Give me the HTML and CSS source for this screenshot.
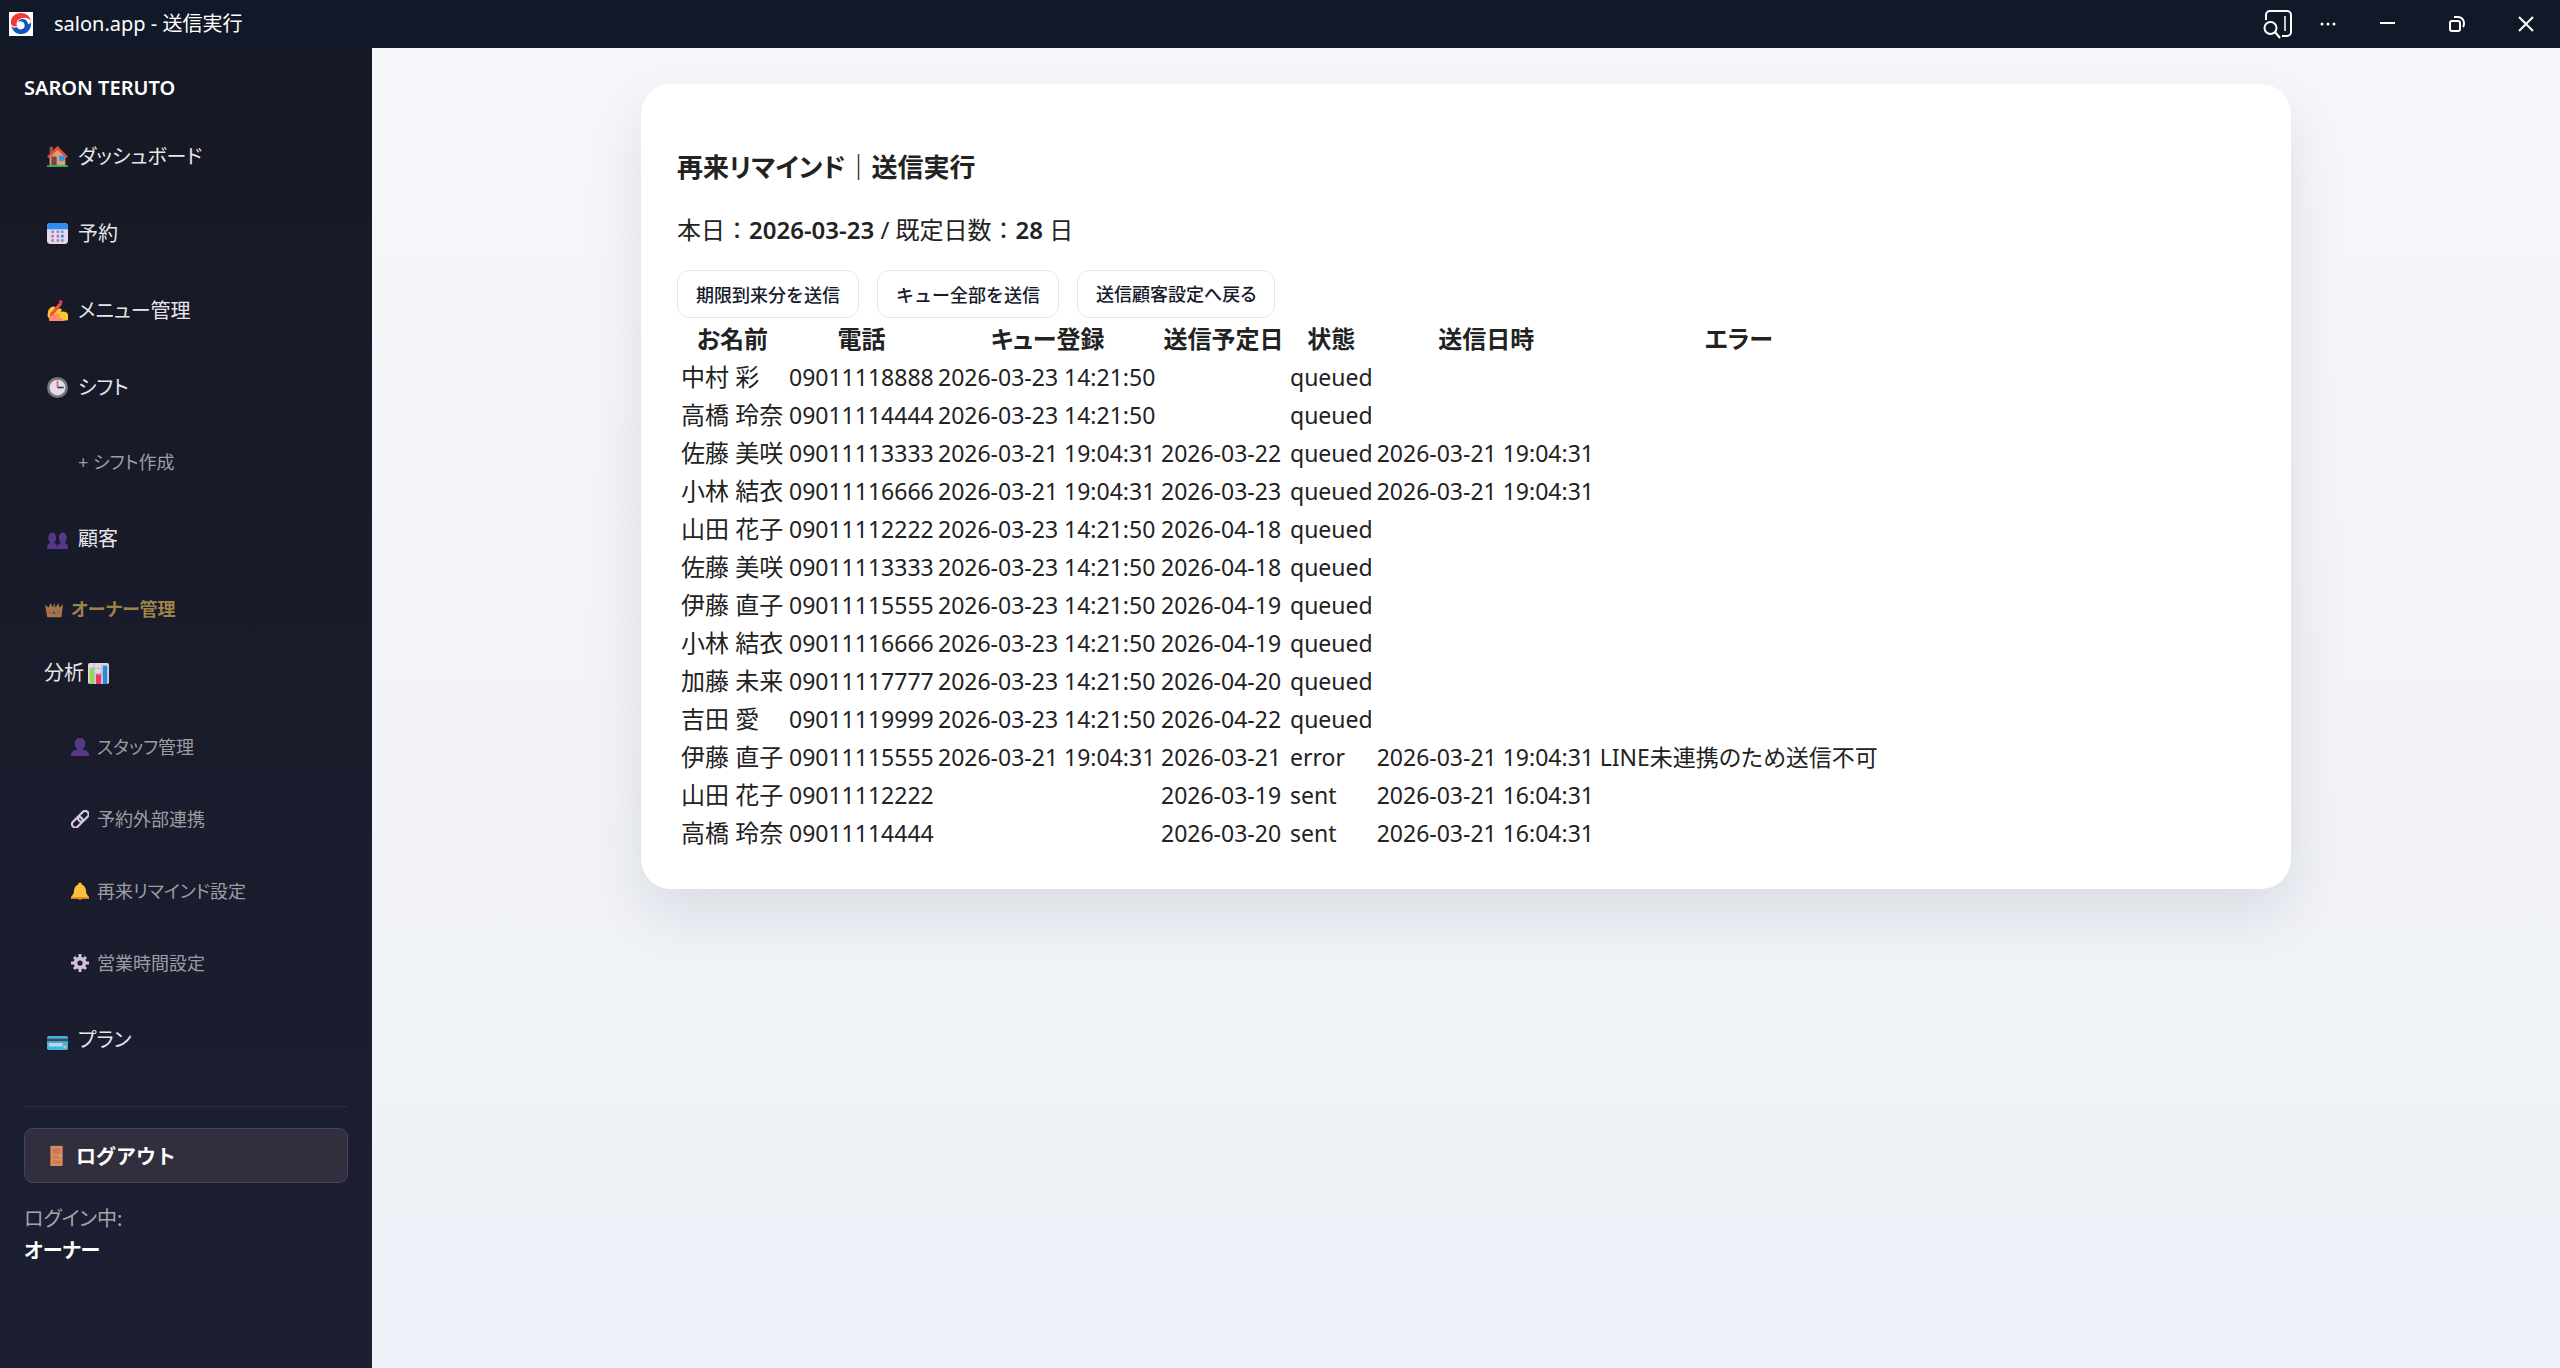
FILE: index.html
```
<!DOCTYPE html>
<html lang="ja">
<head>
  <meta charset="UTF-8" />
  <meta name="viewport" content="width=device-width, initial-scale=1.0"/>
  <title>salon.app - 送信実行</title>
  <link rel="stylesheet" href="styles.css">
</head>
<body>
  <header class="titlebar">
    <svg class="app-icon" viewBox="0 0 24 24" aria-hidden="true">
      <rect width="24" height="24" fill="#fff"/>
      <path d="M2 12C1 5 6 1 12 1c5 0 9 3 10 8-3-4-8-4-11-2-3 1-4 4-3 7-3 1-5 0-6-2z" fill="#ee3b33"/>
      <path d="M22 9c1 8-4 14-11 13-4 0-7-3-9-8 2 2 4 2 6 1 1 3 5 3 7 1 1-2 1-4-1-6-2-1-3-1-5 0 1-3 5-4 8-2 1 1 2 3 2 4 2 0 3-1 3-3z" fill="#1554b8"/>
    </svg>
    <span class="app-title">salon.app - 送信実行</span>
    <button class="tool-button" aria-label="検索">
      <svg width="30" height="30" viewBox="0 0 30 30" fill="none" stroke="#fff" stroke-width="2">
        <path d="M3 11V6a4 4 0 0 1 4-4h17a4 4 0 0 1 4 4v17a4 4 0 0 1-4 4h-5"/>
        <path d="M22 7v15" stroke-width="2" stroke="#c5c8ce"/>
        <circle cx="7.500" cy="19" r="6"/>
        <path d="M12 23l5 6"/>
      </svg>
    </button>
    <button class="tool-button" aria-label="その他">
      <svg width="16" height="4" viewBox="0 0 16 4" fill="#fff"><circle cx="2" cy="2" r="1.500"/><circle cx="8" cy="2" r="1.500"/><circle cx="14" cy="2" r="1.500"/></svg>
    </button>
    <button class="window-button" aria-label="最小化">
      <svg width="16" height="16" viewBox="0 0 16 16" stroke="#fff" stroke-width="2"><path d="M0 7h15"/></svg>
    </button>
    <button class="window-button" aria-label="元に戻す">
      <svg width="16" height="16" viewBox="0 0 16 16" fill="none" stroke="#fff" stroke-width="2"><rect x="1" y="5" width="10" height="10" rx="2"/><path d="M5 1h4a6 6 0 0 1 6 6c0 2 0 3-1 4"/></svg>
    </button>
    <button class="window-button" aria-label="閉じる">
      <svg width="16" height="16" viewBox="0 0 16 16" stroke="#fff" stroke-width="2"><path d="M1 1l14 14M15 1L1 15"/></svg>
    </button>
  </header>

  <div class="layout">
    <aside class="sidebar">
      <div class="brand">SARON TERUTO</div>
      <nav class="menu">
        <a class="item" href="#">
          <svg viewBox="0 0 24 24"><rect x="3" y="1" width="4" height="10" fill="#8b5a4a"/><path d="M3 12l9-9 9 9v11H3z" fill="#e0a070"/><path d="M1 13L12 2l11 11" fill="none" stroke="#e2493c" stroke-width="3"/><rect x="5" y="12" width="6" height="10" fill="#704a48"/><rect x="14" y="11" width="6" height="6" fill="#2499ee"/><rect y="22" width="24" height="2" fill="#2fae66"/></svg>
          ダッシュボード
        </a>
        <a class="item" href="#">
          <svg viewBox="0 0 24 24"><rect width="24" height="24" rx="4" fill="#e5d8ee"/><path d="M0 7V4a4 4 0 0 1 4-4h16a4 4 0 0 1 4 4v3z" fill="#2b8df2"/><path d="M5 10h3M11 10h3M16 10h3M5 15h3M11 15h3M5 20h3M11 20h3M16 20h3" stroke="#978aa5" stroke-width="3"/><path d="M16 15h3" stroke="#1689ee" stroke-width="3"/></svg>
          予約
        </a>
        <a class="item" href="#">
          <svg viewBox="0 0 24 24"><path d="M1 15c0-5 5-9 8-7 1 0 0 3-2 5 4-1 6-4 9-3 2 1 0 3-1 3 4 0 7 0 9 3v7l-9 1H4c-2 0-2-2-1-3-2-1-3-3-2-6z" fill="#ffc72f"/><path d="M2 19c4-2 7-3 12-3 3 0 0 4-1 4 3 0 5 1 6 4H4c-2-1-1-3 0-3z" fill="#ff8e6e"/><path d="M14 3l3 2-10 12-4 2 1-4z" fill="#f05242"/><path d="M14 0l4 1-1 4-3-2z" fill="#ef3157"/></svg>
          メニュー管理
        </a>
        <a class="item" href="#">
          <svg viewBox="0 0 24 24"><circle cx="12" cy="12" r="12" fill="#77747b"/><circle cx="12" cy="12" r="9" fill="#e4dde7"/><path d="M12 4v8" stroke="#f05c7c" stroke-width="2"/><path d="M12 12h7" stroke="#49385a" stroke-width="2"/></svg>
          シフト
        </a>
        <div class="submenu">
          <a class="sub plain" href="#">+ シフト作成</a>
        </div>
        <a class="item" href="#">
          <svg viewBox="0 0 24 24"><path d="M0 24c0-6 2-6 4-7-4-3-3-12 2-12s6 9 2 12c3 1 4 1 4 7zM12 24c0-6 1-6 4-7-4-3-3-12 2-12s6 9 2 12c3 1 4 1 4 7z" fill="#573788"/></svg>
          顧客
        </a>
        <div class="section">
          <svg viewBox="0 0 24 24"><path d="M0 6l5 4 2-6 4 6 1-7 2 7 4-6 1 6 5-4-2 17H3z" fill="#a87445"/><circle cx="12" cy="17" r="2" fill="#315ba7"/><circle cx="6" cy="17" r="1" fill="#b62c4d"/><circle cx="18" cy="17" r="1" fill="#b62c4d"/></svg>
          オーナー管理
        </div>
        <a class="item analysis" href="#">
          分析
          <svg viewBox="0 0 24 24"><rect width="24" height="24" rx="2" fill="#dfd6e6"/><path d="M1 6h22M1 12h22M7 1v22M16 1v22" stroke="#bcb2c8"/><rect x="2" y="6" width="5" height="18" fill="#8cdb57"/><rect x="9" y="13" width="6" height="11" fill="#ed3767"/><rect x="17" y="3" width="5" height="21" fill="#258ddd"/></svg>
        </a>
        <div class="submenu owner">
          <a class="sub" href="#">
            <svg viewBox="0 0 24 24"><path d="M0 24c0-7 4-7 9-9C2 10 4 0 12 0s10 10 3 15c5 2 9 2 9 9z" fill="#573788"/></svg>
            スタッフ管理
          </a>
          <a class="sub" href="#">
            <svg viewBox="0 0 24 24" fill="none" stroke="#d5c9dd" stroke-width="3"><rect x="8" y="4" width="16" height="9" rx="4" transform="rotate(-45 16 8)"/><rect x="0" y="12" width="16" height="9" rx="4" transform="rotate(-45 8 16)"/></svg>
            予約外部連携
          </a>
          <a class="sub" href="#">
            <svg viewBox="0 0 24 24"><path d="M10 1h4v2c4 2 6 5 6 9 0 3 2 6 4 8v2H0v-2c2-2 4-5 4-8 0-4 2-7 6-9z" fill="#ffc13b"/><path d="M9 22h6l-2 2h-2z" fill="#d9792f"/><path d="M0 20h24v2H0z" fill="#f29a30"/></svg>
            再来リマインド設定
          </a>
          <a class="sub" href="#">
            <svg viewBox="0 0 24 24" fill="none" stroke="#cfc0d8"><circle cx="12" cy="12" r="6" stroke-width="5"/><path d="M12 0v5M12 19v5M0 12h5M19 12h5M4 4l3 3M17 17l3 3M20 4l-3 3M7 17l-3 3" stroke-width="4"/></svg>
            営業時間設定
          </a>
        </div>
        <a class="item" href="#">
          <svg viewBox="0 0 24 24"><rect y="8" width="24" height="16" rx="2" fill="#39b5e8"/><rect y="11" width="24" height="3" fill="#4b4657"/><rect x="2" y="16" width="16" height="4" rx="1" fill="#c3d4df"/><rect x="19" y="19" width="3" height="3" fill="#f4bf31"/></svg>
          プラン
        </a>
      </nav>
      <div class="account">
        <button class="logout">
          <svg viewBox="0 0 24 24"><rect x="5" y="1" width="14" height="23" fill="#d98b5e"/><path d="M8 4h8v6H8zM8 13h8v2H8zM8 18h8v3H8z" fill="#c87856"/><path d="M16 11v3" stroke="#f1bf64"/></svg>
          ログアウト
        </button>
        <div class="login-user">ログイン中:<strong>オーナー</strong></div>
      </div>
    </aside>

    <main class="content">
      <section class="card">
        <h2>再来リマインド｜送信実行</h2>
        <p>本日：<strong>2026-03-23</strong> / 既定日数：<strong>28</strong> 日</p>
        <div class="actions">
          <button class="btn">期限到来分を送信</button>
          <button class="btn">キュー全部を送信</button>
          <a class="btn back" href="#">送信顧客設定へ戻る</a>
        </div>
        <table class="queue">
          <colgroup>
            <col class="col-name"><col class="col-phone"><col class="col-time"><col class="col-date"><col class="col-status"><col class="col-time"><col class="col-error">
          </colgroup>
          <thead>
            <tr><th>お名前</th><th>電話</th><th>キュー登録</th><th>送信予定日</th><th>状態</th><th>送信日時</th><th>エラー</th></tr>
          </thead>
          <tbody>
            <tr><td>中村 彩</td><td>09011118888</td><td>2026-03-23 14:21:50</td><td></td><td>queued</td><td></td><td></td></tr>
            <tr><td>高橋 玲奈</td><td>09011114444</td><td>2026-03-23 14:21:50</td><td></td><td>queued</td><td></td><td></td></tr>
            <tr><td>佐藤 美咲</td><td>09011113333</td><td>2026-03-21 19:04:31</td><td>2026-03-22</td><td>queued</td><td>2026-03-21 19:04:31</td><td></td></tr>
            <tr><td>小林 結衣</td><td>09011116666</td><td>2026-03-21 19:04:31</td><td>2026-03-23</td><td>queued</td><td>2026-03-21 19:04:31</td><td></td></tr>
            <tr><td>山田 花子</td><td>09011112222</td><td>2026-03-23 14:21:50</td><td>2026-04-18</td><td>queued</td><td></td><td></td></tr>
            <tr><td>佐藤 美咲</td><td>09011113333</td><td>2026-03-23 14:21:50</td><td>2026-04-18</td><td>queued</td><td></td><td></td></tr>
            <tr><td>伊藤 直子</td><td>09011115555</td><td>2026-03-23 14:21:50</td><td>2026-04-19</td><td>queued</td><td></td><td></td></tr>
            <tr><td>小林 結衣</td><td>09011116666</td><td>2026-03-23 14:21:50</td><td>2026-04-19</td><td>queued</td><td></td><td></td></tr>
            <tr><td>加藤 未来</td><td>09011117777</td><td>2026-03-23 14:21:50</td><td>2026-04-20</td><td>queued</td><td></td><td></td></tr>
            <tr><td>吉田 愛</td><td>09011119999</td><td>2026-03-23 14:21:50</td><td>2026-04-22</td><td>queued</td><td></td><td></td></tr>
            <tr><td>伊藤 直子</td><td>09011115555</td><td>2026-03-21 19:04:31</td><td>2026-03-21</td><td>error</td><td>2026-03-21 19:04:31</td><td>LINE未連携のため送信不可</td></tr>
            <tr><td>山田 花子</td><td>09011112222</td><td></td><td>2026-03-19</td><td>sent</td><td>2026-03-21 16:04:31</td><td></td></tr>
            <tr><td>高橋 玲奈</td><td>09011114444</td><td></td><td>2026-03-20</td><td>sent</td><td>2026-03-21 16:04:31</td><td></td></tr>
          </tbody>
        </table>
      </section>
    </main>
  </div>
</body>
</html>
```

FILE: styles.css
```
* {
  box-sizing: border-box;
}

body {
  margin: 0;
  min-height: 100vh;
  display: flex;
  flex-direction: column;
  font-family: "Noto Sans", "Noto Sans CJK JP", sans-serif;
  font-feature-settings: "palt";
  font-size: 24px;
  line-height: 32px;
  color: #222;
}

a {
  color: inherit;
  text-decoration: none;
}

button {
  font-family: inherit;
  cursor: pointer;
}

/* title bar */
.titlebar {
  display: flex;
  align-items: center;
  height: 48px;
  padding-left: 9px;
  background: #111827;
  color: #fff;
}

.app-icon {
  width: 24px;
  height: 24px;
}

.app-title {
  flex: 1;
  margin-left: 21px;
  font-size: 20px;
}

.tool-button,
.window-button {
  display: flex;
  align-items: center;
  justify-content: center;
  width: 50px;
  height: 48px;
  padding: 0;
  border: none;
  background: none;
}

.window-button {
  width: 69px;
}

.layout {
  flex: 1;
  display: flex;
}

/* sidebar */
.sidebar {
  flex: 0 0 372px;
  padding: 24px;
  background: linear-gradient(180deg, #161824, #1c1f32);
  color: #e6e6e8;
}

.sidebar svg {
  flex: none;
  width: 21px;
  height: 21px;
}

.brand {
  color: #fff;
  font-size: 20px;
  font-weight: 600;
}

.menu {
  margin-top: 14px;
  padding-bottom: 28px;
  border-bottom: 1px solid #2b2e40;
}

.item,
.sub,
.section {
  display: flex;
  align-items: center;
  gap: 10px;
  height: 77px;
  padding-left: 23px;
  font-size: 20px;
}

.submenu {
  margin-bottom: 2px;
}

.sub {
  gap: 8px;
  height: 72px;
  padding-left: 47px;
  font-size: 18px;
  color: #9d9da4;
}

.sub.plain {
  padding-left: 54px;
}

.sidebar .sub svg,
.sidebar .section svg {
  width: 18px;
  height: 18px;
}

.section {
  gap: 8px;
  height: 64px;
  padding-left: 21px;
  font-size: 18px;
  font-weight: 700;
  color: #9e8349;
}

.item.analysis {
  gap: 4px;
  height: 64px;
  padding-left: 20px;
}

.submenu.owner {
  padding-top: 6px;
}

.account {
  padding-top: 21px;
}

.logout {
  display: flex;
  align-items: center;
  gap: 9px;
  width: 100%;
  height: 55px;
  padding: 0 21px;
  border: 1px solid #46425f;
  border-radius: 9px;
  background: #312e3e;
  color: #fff;
  font-size: 20px;
  font-weight: 700;
}

.login-user {
  margin-top: 20px;
  font-size: 20px;
  color: #a6a6a8;
}

.login-user strong {
  display: block;
  color: #fff;
}

/* main */
.content {
  flex: 1;
  padding: 36px;
  background: linear-gradient(180deg, #f6f7fb, #edf0f6);
}

.card {
  max-width: 1650px;
  margin: 0 auto;
  padding: 36px;
  border-radius: 30px;
  background: #fff;
  box-shadow: 0 24px 60px rgba(17, 24, 39, 0.1);
}

.card h2 {
  margin: 28px 0;
  font-size: 26px;
  line-height: 38px;
}

.card p {
  margin: 0 0 24px;
  font-feature-settings: normal;
}

.card p strong {
  font-weight: 600;
}

.actions {
  display: flex;
  gap: 18px;
}

.btn {
  display: flex;
  align-items: center;
  height: 48px;
  padding: 0 18px;
  border: 1px solid #e2e5eb;
  border-radius: 12px;
  background: #fff;
  color: #171a2b;
  font-size: 18px;
  font-weight: 500;
}

/* table */
.queue {
  margin-top: 1px;
  border-spacing: 2px;
  font-size: 23px;
  white-space: nowrap;
}

.queue th,
.queue td {
  height: 36px;
  padding: 2px 1px;
  line-height: 32px;
}

.queue th {
  font-size: 24px;
}

.queue td:first-child {
  padding-left: 2px;
  font-size: 24px;
}

.col-name {
  width: 107px;
}

.col-phone {
  width: 147px;
}

.col-time {
  width: 221px;
}

.col-date {
  width: 127px;
}

.col-status {
  width: 84px;
}

.col-error {
  width: 276px;
}
```
